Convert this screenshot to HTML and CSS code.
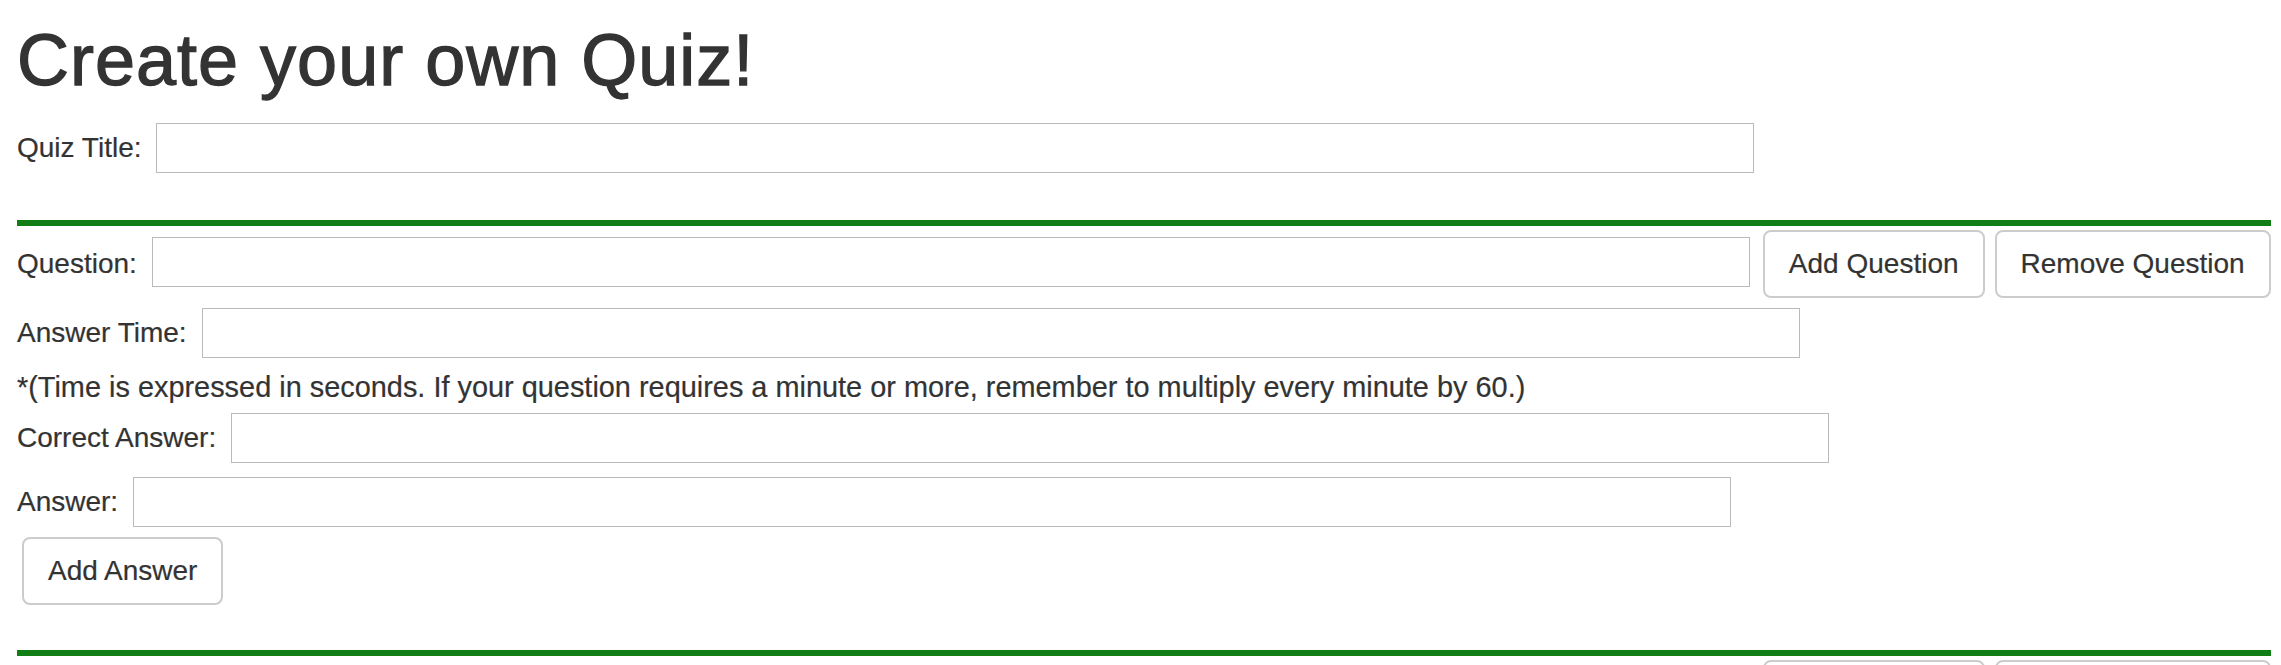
FILE: index.html
```html
<!DOCTYPE html>
<html lang="en">
<head>
<meta charset="utf-8">
<title>Create your own Quiz!</title>
<link rel="stylesheet" href="styles.css">
</head>
<body>
<div class="page">
  <h1 class="title">Create your own Quiz!</h1>
  <div class="field quiz-title">
    <label class="label">Quiz Title:</label>
    <input class="text-input" type="text">
  </div>

  <div class="question">
    <hr class="divider">
    <div class="field q-row">
      <label class="label">Question:</label>
      <input class="text-input q-input" type="text">
      <button class="btn btn-first" type="button">Add Question</button>
      <button class="btn" type="button">Remove Question</button>
    </div>
    <div class="field time-row">
      <label class="label">Answer Time:</label>
      <input class="text-input" type="text">
    </div>
    <p class="note">*(Time is expressed in seconds. If your question requires a minute or more, remember to multiply every minute by 60.)</p>
    <div class="field correct-row">
      <label class="label">Correct Answer:</label>
      <input class="text-input" type="text">
    </div>
    <div class="field answer-row">
      <label class="label">Answer:</label>
      <input class="text-input" type="text">
    </div>
    <button class="btn btn-answer" type="button">Add Answer</button>
  </div>

  <div class="question">
    <hr class="divider">
    <div class="field q-row">
      <label class="label">Question:</label>
      <input class="text-input q-input" type="text">
      <button class="btn btn-first" type="button">Add Question</button>
      <button class="btn" type="button">Remove Question</button>
    </div>
    <div class="field time-row">
      <label class="label">Answer Time:</label>
      <input class="text-input" type="text">
    </div>
    <p class="note">*(Time is expressed in seconds. If your question requires a minute or more, remember to multiply every minute by 60.)</p>
    <div class="field correct-row">
      <label class="label">Correct Answer:</label>
      <input class="text-input" type="text">
    </div>
    <div class="field answer-row">
      <label class="label">Answer:</label>
      <input class="text-input" type="text">
    </div>
    <button class="btn btn-answer" type="button">Add Answer</button>
  </div>
</div>
</body>
</html>
```

FILE: styles.css
```css
html, body {
  margin: 0;
  padding: 0;
  background: #ffffff;
}

body {
  font-family: "Liberation Sans", Arial, Helvetica, sans-serif;
  font-size: 28px;
  line-height: 40px;
  color: #333333;
}

.page {
  padding: 0 10px 0 17px;
}

.title {
  margin: 21px 0 0;
  font-size: 72px;
  line-height: 79px;
  font-weight: 400;
  letter-spacing: 1px;
  -webkit-text-stroke: 1.3px #333333;
  color: #333333;
}

.field {
  display: flex;
  align-items: center;
  height: 50px;
}

.label {
  margin-right: 15px;
  white-space: nowrap;
  -webkit-text-stroke: 0.2px #333333;
}

.text-input {
  box-sizing: border-box;
  width: 1598px;
  height: 50px;
  margin: 0;
  padding: 2px 6px;
  border: 1px solid #bababa;
  border-radius: 0;
  background: #ffffff;
  font-family: inherit;
  font-size: 26px;
  color: #333333;
  outline: none;
}

.quiz-title {
  margin-top: 23px;
}

.divider {
  margin: 47px 0 0;
  height: 6px;
  border: 0;
  background: #117e15;
}

.question + .question .divider {
  margin-top: 45px;
}

.q-row {
  height: 68px;
  margin-top: 4px;
}

.q-input {
  margin-bottom: 4px;
}

.btn {
  box-sizing: border-box;
  height: 68px;
  margin: 0 0 0 10px;
  padding: 12px 24px;
  border: 2px solid #cccccc;
  border-radius: 8px;
  background: #ffffff;
  font-family: inherit;
  font-size: 28px;
  line-height: 40px;
  color: #333333;
  -webkit-text-stroke: 0.2px #333333;
  white-space: nowrap;
  cursor: pointer;
}

.btn-first {
  margin-left: 13px;
}

.time-row {
  margin-top: 10px;
}

.note {
  margin: 9px 0 0;
  font-size: 28.9px;
  line-height: 40px;
  -webkit-text-stroke: 0.2px #333333;
}

.correct-row {
  margin-top: 6px;
}

.answer-row {
  margin-top: 14px;
}

.btn-answer {
  display: block;
  margin: 10px 0 0 5px;
}
```
